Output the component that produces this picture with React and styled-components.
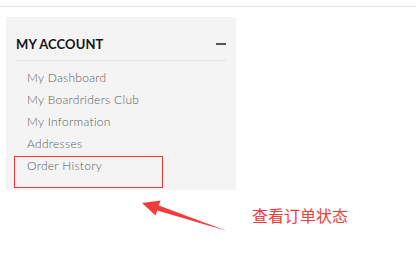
import React from "react";
import styled, { createGlobalStyle } from "styled-components";

const GlobalStyle = createGlobalStyle`
  body {
    margin: 0;
    background: #fff;
    font-family: Lato, "Open Sans", sans-serif;
  }
`;

const Page = styled.div`
  position: relative;
  width: 416px;
  height: 280px;
  overflow: hidden;
`;

const TopBar = styled.div`
  height: 6px;
  border-bottom: 1px solid #e4e4e4;
`;

const Sidebar = styled.div`
  margin: 10px 0 0 6px;
  width: 230px;
  height: 173px;
  box-sizing: border-box;
  padding: 0 10px;
  background: #f4f4f4;
`;

const Header = styled.div`
  display: flex;
  justify-content: space-between;
  align-items: center;
  padding: 19px 0 8px;
  border-bottom: 1px solid #e3e3e3;
`;

const Title = styled.h3`
  margin: 0;
  font-size: 13px;
  line-height: 16px;
  font-weight: 700;
  color: #151515;
  letter-spacing: 0.1px;
`;

const Collapse = styled.span`
  width: 10px;
  height: 2px;
  background: #555;
  margin-top: -1px;
`;

const Menu = styled.ul`
  list-style: none;
  margin: 0;
  padding: 6px 0 0;
`;

const Item = styled.li`
  position: relative;
  padding-left: 11px;
  font-size: 12px;
  line-height: 22px;
  font-weight: 300;
  letter-spacing: 0.3px;
  color: #606060;

  &::after {
    content: "";
    display: ${(p) => (p.$marked ? "block" : "none")};
    position: absolute;
    left: -2px;
    top: 1px;
    width: 149px;
    height: 32px;
    box-sizing: border-box;
    border: 1px solid #f03a3a;
  }
`;

const Arrow = styled.svg`
  position: absolute;
  left: 0;
  top: 0;
`;

const Note = styled.span`
  position: absolute;
  left: 252px;
  top: 207px;
  font-family: "Noto Sans CJK SC", sans-serif;
  font-size: 16px;
  line-height: 16px;
  color: #f23c3c;
`;

const links = [
  "My Dashboard",
  "My Boardriders Club",
  "My Information",
  "Addresses",
  "Order History",
];

export default function App() {
  return (
    <Page>
      <GlobalStyle />
      <TopBar />
      <Sidebar>
        <Header>
          <Title>MY ACCOUNT</Title>
          <Collapse />
        </Header>
        <Menu>
          {links.map((l) => (
            <Item key={l} $marked={l === "Order History"}>
              {l}
            </Item>
          ))}
        </Menu>
      </Sidebar>
      <Arrow width="416" height="280">
        <polygon
          points="142,203 160.5,200.4 158.8,205.6 227,231 157.2,210.4 155.5,215.6"
          fill="#f23c3c"
        />
      </Arrow>
      <Note>查看订单状态</Note>
    </Page>
  );
}
